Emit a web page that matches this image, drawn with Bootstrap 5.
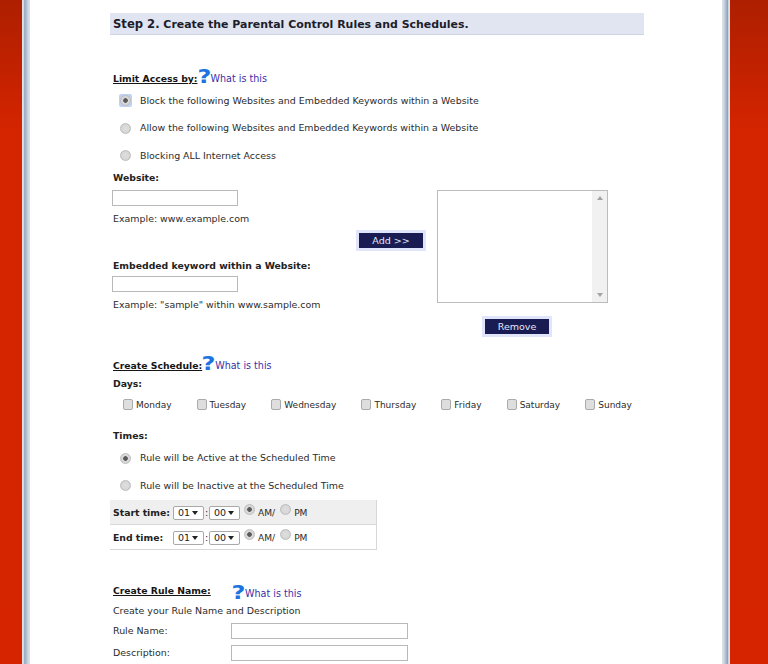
<!DOCTYPE html>
<html lang="en">
<head>
<meta charset="utf-8">
<title>Parental Control Rules</title>
<link rel="stylesheet" href="https://cdn.jsdelivr.net/npm/bootstrap@5.3.0/dist/css/bootstrap.min.css">
<style>
html,body{height:664px;overflow:hidden;margin:0}
body{font-family:"DejaVu Sans",Verdana,sans-serif;font-size:9.45px;line-height:12px;color:#2b2b2b;background:#fff}
.shell{height:664px}
.rail{background:linear-gradient(180deg,#ad1f00 0,#d42400 130px,#d62400 100%);flex:none}
.rail-l{width:22px}.rail-r{width:38px}
.edge{width:8px;flex:none}
.edge-l{background:linear-gradient(90deg,#d3d6dc 0,#e8ebef 14%,#9fb0c6 30%,#a9b8cc 50%,#c6d0de 70%,#dfe5ec 100%)}
.edge-r{background:linear-gradient(90deg,#dfe5ec 0,#c6d0de 30%,#a9b8cc 50%,#8fa2ba 70%,#e8ebef 86%,#d3d6dc 100%)}
.page{flex:1 1 auto;padding:13px 0 0 80px;overflow:hidden}
.wrap{width:534px}
.step{height:22px;background:#e1e5f1;border-bottom:1px solid #cfd4e4;padding:4px 3px 0;font-weight:700;font-size:10.95px;line-height:15px;color:#1d1d2b}
.step b{font-size:11.6px}
.sect{font-weight:700;font-size:9.25px;text-decoration:underline;color:#151515;margin-left:3px}
.hint{font-size:9.6px;color:#3b2fa8}
.qm{font-family:"DejaVu Sans",sans-serif;font-weight:700;color:#1d73e0;font-size:20px;line-height:14px;width:13px;text-align:center;position:relative;top:-2px;transform:scaleX(1.2)}
.qm-low{top:2px}
.h-limit{margin-top:33px;height:17px}
.opt{height:27.5px;margin-left:10px}
.opt span{margin-left:9px}
.tick{appearance:none;-webkit-appearance:none;width:11px;height:11px;margin:0;border-radius:50%;background:radial-gradient(circle,#dedede 0,#d8d8d8 60%,#b5b5b5 100%);border:1px solid #bdbdbd;flex:none}
.tick:checked{background:radial-gradient(circle,#5a5a5a 0,#5a5a5a 32%,#dadada 40%,#d6d6d6 70%,#b0b0b0 100%)}
.tick-focus{width:13px;height:13px;background:#c0d2f4;border-radius:2px;flex:none;margin-left:-1px;margin-right:-1px}
.box{appearance:none;-webkit-appearance:none;width:10px;height:11px;margin:0 3px 0 0;border:1px solid #aaa;border-radius:2px;background:#dedede;flex:none}
.lab{font-weight:700;font-size:9.3px;color:#222;margin-left:3px}
.field{display:block;width:126px;height:16px;border:1px solid #b9b9b9;background:#fff;margin-left:2px;padding:0}
.act{background:#191c52;color:#e4e6f7;font-family:"DejaVu Sans",sans-serif;font-size:9.5px;font-weight:400;line-height:14px;border:3px solid #e0e5fb;box-sizing:content-box;padding:1px 0 0;height:14px;width:64px;outline:0;border-radius:0;display:block}
.add{margin-left:-1px}
.rem{margin:13px 0 0 45px}
.lefty{width:247px}
.listbox{width:171px;height:113px;border:1px solid #bcbcbc;background:#fff}
.track{width:15px;background:#f1f1f1;padding:5px 0}
.arr-u,.arr-d{width:0;height:0;border-left:3.5px solid transparent;border-right:3.5px solid transparent}
.arr-u{border-bottom:4px solid #a3a3a3}.arr-d{border-top:4px solid #a3a3a3}
.midcol{width:80px;padding-top:58px}
.rightcol{width:171px;padding-top:18px}
.dayrow{margin-left:13px;margin-top:8px;height:14px;width:509px}
.daycell{font-size:9px}
.times{width:267px}
.trow{height:25px;padding:3px 0 0 3px;border-bottom:1px solid #d8d8d8;border-right:1px solid #d8d8d8}
.trow.alt{background:#efefef}
.tlab{font-weight:700;font-size:9.3px;color:#222;width:60px;flex:none;white-space:nowrap}
.pick{appearance:none;-webkit-appearance:none;width:31px;height:14px;font-size:9.5px;line-height:12px;font-family:"DejaVu Sans",sans-serif;padding:0 0 0 4px;border:1px solid #a9a9a9;border-radius:2px;color:#222;background:#fff url("data:image/svg+xml,%3Csvg xmlns='http://www.w3.org/2000/svg' width='6' height='4'%3E%3Cpath d='M0 0h6L3 4z' fill='%23222'/%3E%3C/svg%3E") no-repeat right 5px center}
.sep{width:5px;text-align:center;font-size:9.5px;margin:0}
.ampm{font-size:9.1px}
.ampm .tick{position:relative;top:-4px;margin:0 3px 0 5px}
.ampm .tick:first-child{margin-left:4px}
.name-row{height:22px;margin-left:3px}
.name-row label{width:118px;margin:0}
.txt{width:177px;height:16px;border:1px solid #b9b9b9;background:#fff;padding:0;display:block}
.gap-a{margin-top:2px}.gap-b{margin:7px 0 0 3px}.gap-c{margin:35px 0 4px 3px}.gap-d{margin-bottom:6px}
.h-sched{margin-top:18px;height:17px}
.h-rule{margin-top:30px;height:17px}
.q-indent{width:119px}
.hint-low{margin-bottom:-3px}
.lab-days{margin-top:6px}.lab-times{margin-top:18px;margin-bottom:3px}
.rule-intro{margin:8px 0 3px 3px}
</style>
</head>
<body>
<div class="shell d-flex">
  <div class="rail rail-l"></div>
  <div class="edge edge-l"></div>
  <main class="page">
    <div class="wrap">
      <div class="step"><b>Step 2.</b> Create the Parental Control Rules and Schedules.</div>

      <div class="h-limit d-flex align-items-end"><span class="sect">Limit Access by:</span><span class="qm">?</span><a class="hint text-decoration-none" href="#">What is this</a></div>

      <div class="gap-a">
        <div class="opt d-flex align-items-center"><div class="tick-focus d-flex align-items-center justify-content-center"><input class="tick" type="radio" name="a" checked></div><span>Block the following Websites and Embedded Keywords within a Website</span></div>
        <div class="opt d-flex align-items-center"><input class="tick" type="radio" name="a"><span>Allow the following Websites and Embedded Keywords within a Website</span></div>
        <div class="opt d-flex align-items-center"><input class="tick" type="radio" name="a"><span>Blocking ALL Internet Access</span></div>
      </div>

      <div class="d-flex gap-a">
        <div class="lefty">
          <div class="lab gap-d">Website:</div>
          <input class="field" type="text">
          <div class="gap-b">Example: www.example.com</div>
          <div class="lab gap-c">Embedded keyword within a Website:</div>
          <input class="field" type="text">
          <div class="gap-b">Example: "sample" within www.sample.com</div>
        </div>
        <div class="midcol"><button class="act add" type="button">Add &gt;&gt;</button></div>
        <div class="rightcol">
          <div class="listbox d-flex justify-content-end">
            <div class="track d-flex flex-column justify-content-between align-items-center"><div class="arr-u"></div><div class="arr-d"></div></div>
          </div>
          <button class="act rem" type="button">Remove</button>
        </div>
      </div>

      <div class="h-sched d-flex align-items-end"><span class="sect">Create Schedule:</span><span class="qm">?</span><a class="hint text-decoration-none" href="#">What is this</a></div>
      <div class="lab lab-days">Days:</div>
      <div class="dayrow d-flex justify-content-between daycell">
        <label class="d-flex align-items-center"><input class="box" type="checkbox">Monday</label>
        <label class="d-flex align-items-center"><input class="box" type="checkbox">Tuesday</label>
        <label class="d-flex align-items-center"><input class="box" type="checkbox">Wednesday</label>
        <label class="d-flex align-items-center"><input class="box" type="checkbox">Thursday</label>
        <label class="d-flex align-items-center"><input class="box" type="checkbox">Friday</label>
        <label class="d-flex align-items-center"><input class="box" type="checkbox">Saturday</label>
        <label class="d-flex align-items-center"><input class="box" type="checkbox">Sunday</label>
      </div>
      <div class="lab lab-times">Times:</div>
      <div class="opt d-flex align-items-center"><input class="tick" type="radio" name="t" checked><span>Rule will be Active at the Scheduled Time</span></div>
      <div class="opt d-flex align-items-center"><input class="tick" type="radio" name="t"><span>Rule will be Inactive at the Scheduled Time</span></div>

      <div class="times">
        <div class="trow alt d-flex align-items-center"><span class="tlab">Start time:</span><select class="pick"><option>01</option></select><span class="sep">:</span><select class="pick"><option>00</option></select><span class="ampm d-flex align-items-center"><input class="tick" type="radio" name="s" checked>AM/<input class="tick" type="radio" name="s">PM</span></div>
        <div class="trow d-flex align-items-center"><span class="tlab">End time:</span><select class="pick"><option>01</option></select><span class="sep">:</span><select class="pick"><option>00</option></select><span class="ampm d-flex align-items-center"><input class="tick" type="radio" name="e" checked>AM/<input class="tick" type="radio" name="e">PM</span></div>
      </div>

      <div class="h-rule d-flex align-items-end"><span class="sect q-indent">Create Rule Name:</span><span class="qm qm-low">?</span><a class="hint hint-low text-decoration-none" href="#">What is this</a></div>
      <div class="rule-intro">Create your Rule Name and Description</div>
      <div class="name-row d-flex align-items-center"><label>Rule Name:</label><input class="txt" type="text"></div>
      <div class="name-row d-flex align-items-center"><label>Description:</label><input class="txt" type="text"></div>
    </div>
  </main>
  <div class="edge edge-r"></div>
  <div class="rail rail-r"></div>
</div>
<script src="https://cdn.jsdelivr.net/npm/bootstrap@5.3.0/dist/js/bootstrap.bundle.min.js"></script>
</body>
</html>
